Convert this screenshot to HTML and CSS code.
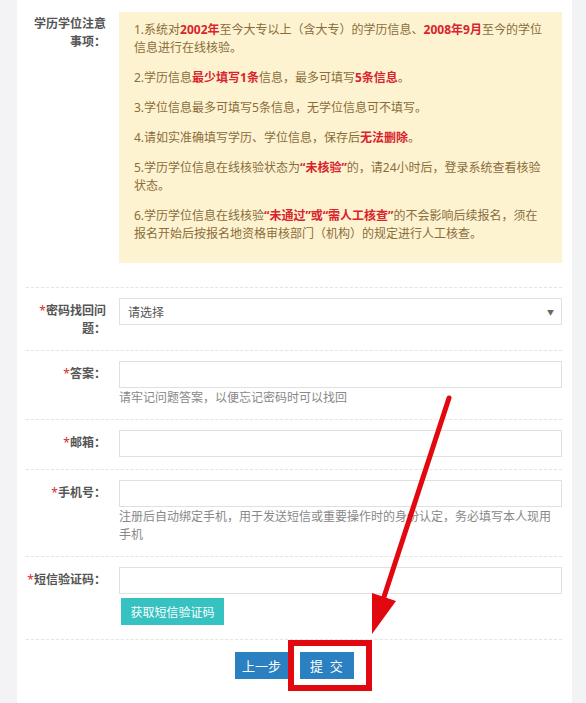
FILE: index.html
```html
<!DOCTYPE html>
<html lang="zh-CN">
<head>
    <meta charset="UTF-8">
    <meta name="viewport" content="width=device-width, initial-scale=1.0">
    <title>注册 - 学历学位信息</title>
    <link rel="stylesheet" href="styles.css">
</head>
<body>
    <div class="page">
        <div class="card">
            <div class="row row-notice">
                <div class="label">学历学位注意事项：</div>
                <div class="field">
                    <div class="notice">
                        <p>1.系统对<b>2002年</b>至今大专以上（含大专）的学历信息、<b>2008年9月</b>至今的学位信息进行在线核验。</p>
                        <p>2.学历信息<b>最少填写1条</b>信息，最多可填写<b>5条信息</b>。</p>
                        <p>3.学位信息最多可填写5条信息，无学位信息可不填写。</p>
                        <p>4.请如实准确填写学历、学位信息，保存后<b>无法删除</b>。</p>
                        <p>5.学历学位信息在线核验状态为<b>“未核验”</b>的，请24小时后，登录系统查看核验状态。</p>
                        <p>6.学历学位信息在线核验<b>“未通过”或“需人工核查”</b>的不会影响后续报名，须在报名开始后按报名地资格审核部门（机构）的规定进行人工核查。</p>
                    </div>
                </div>
            </div>

            <div class="row">
                <div class="label"><span class="req">*</span>密码找回问题：</div>
                <div class="field">
                    <div class="select">
                        <span>请选择</span>
                        <span class="caret">▼</span>
                    </div>
                </div>
            </div>

            <div class="row">
                <div class="label"><span class="req">*</span>答案：</div>
                <div class="field">
                    <input type="text" class="input">
                    <div class="help">请牢记问题答案，以便忘记密码时可以找回</div>
                </div>
            </div>

            <div class="row">
                <div class="label"><span class="req">*</span>邮箱：</div>
                <div class="field">
                    <input type="text" class="input">
                </div>
            </div>

            <div class="row">
                <div class="label"><span class="req">*</span>手机号：</div>
                <div class="field">
                    <input type="text" class="input">
                    <div class="help">注册后自动绑定手机，用于发送短信或重要操作时的身份认定，务必填写本人现用手机</div>
                </div>
            </div>

            <div class="row row-sms">
                <div class="label"><span class="req">*</span>短信验证码：</div>
                <div class="field">
                    <input type="text" class="input">
                    <button class="btn btn-sms">获取短信验证码</button>
                </div>
            </div>

            <div class="actions">
                <button class="btn btn-blue">上一步</button>
                <span class="mark">
                    <button class="btn btn-blue">提&nbsp;&nbsp;交</button>
                </span>
            </div>
        </div>

        <!-- 红色指示箭头 -->
        <svg class="arrow" width="586" height="703" viewBox="0 0 586 703">
            <line x1="449" y1="398" x2="383" y2="600" stroke="#e2080f" stroke-width="5" stroke-linecap="round"/>
            <polygon points="372,634 372,593 396,601" fill="#e2080f"/>
        </svg>
    </div>
</body>
</html>
```

FILE: styles.css
```css
/* Base */
* {
    margin: 0;
    padding: 0;
    box-sizing: border-box;
}

body {
    background-color: #f3f3f5;
    font-family: "Noto Sans", "Noto Sans CJK SC", sans-serif;
    font-size: 12px;
    color: #555;
}

.page {
    position: relative;
    width: 586px;
    height: 703px;
    overflow: hidden;
}

/* Card */
.card {
    margin-left: 17px;
    width: 555px;
    min-height: 703px;
    background-color: #fff;
    padding: 0 10px 0 9px;
}

/* Form rows */
.row {
    display: flex;
    padding: 10px 0 12px;
    border-bottom: 1px dashed #e4e4e4;
}

.row-notice {
    padding: 12px 0 24px;
}

.row-sms {
    padding-bottom: 14px;
}

.label {
    width: 80px;
    margin-right: 13px;
    padding-top: 4px;
    text-align: right;
    font-weight: bold;
    line-height: 18px;
    color: #555;
}

.row-notice .label {
    padding-top: 3px;
}

.req {
    color: #d0312d;
    font-weight: normal;
}

.field {
    flex: 1;
}

/* Notice box */
.notice {
    background-color: #fdf3d1;
    color: #8a6d3b;
    padding: 9px 15px 8px;
    line-height: 18px;
}

.notice p {
    margin-bottom: 12px;
}

.notice b {
    color: #d9232d;
}

/* Inputs */
.input,
.select {
    display: block;
    width: 100%;
    height: 27px;
    border: 1px solid #e0e0e0;
    background-color: #fff;
    font-family: inherit;
    font-size: 12px;
}

.select {
    display: flex;
    align-items: center;
    justify-content: space-between;
    padding: 0 7px 0 8px;
    color: #555;
}

.caret {
    font-size: 7px;
    color: #666;
}

.help {
    margin-top: 1px;
    line-height: 18px;
    color: #888;
}

/* Buttons */
.btn {
    height: 27px;
    border: none;
    color: #fff;
    font-family: inherit;
    font-size: 12px;
    cursor: pointer;
}

.btn-sms {
    display: block;
    margin: 4px 0 0 2px;
    width: 103px;
    background-color: #35c2c0;
}

.actions {
    display: flex;
    justify-content: center;
    gap: 11px;
    padding-top: 12px;
}

.btn-blue {
    width: 54px;
    background-color: #2b80c1;
    font-size: 13px;
}

/* Annotation over the submit button */
.mark {
    position: relative;
    display: inline-block;
    height: 27px;
}

.mark::after {
    content: "";
    position: absolute;
    top: -12px;
    left: -12px;
    right: -18px;
    bottom: -12px;
    border: 6px solid #e2080f;
}

.arrow {
    position: absolute;
    top: 0;
    left: 0;
    pointer-events: none;
}
```
